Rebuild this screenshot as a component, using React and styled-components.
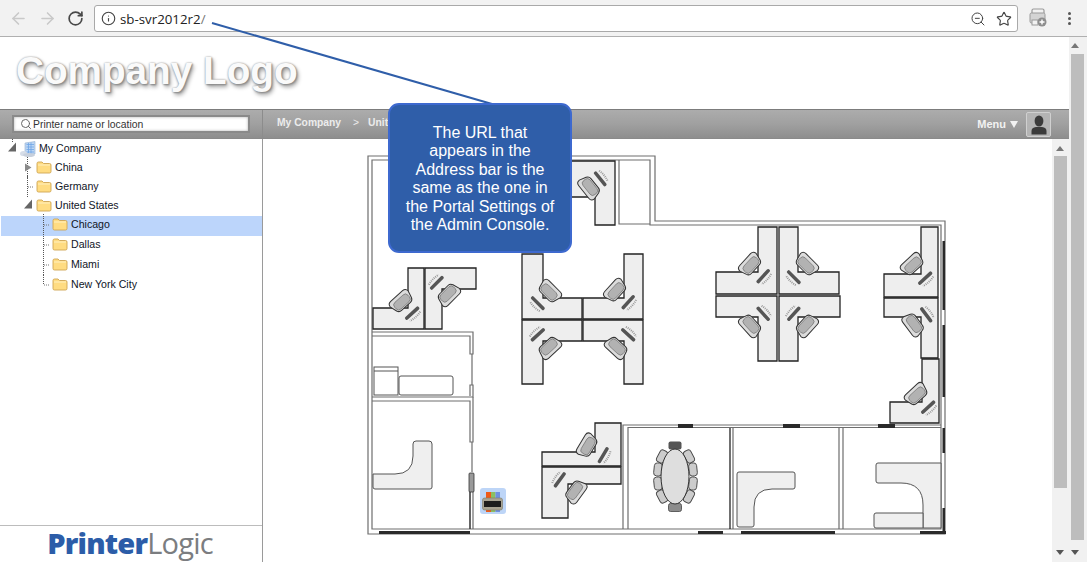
import React from "react";
import styled, { createGlobalStyle } from "styled-components";
import { ArrowLeft, ArrowRight, RotateCw, Info, ZoomOut, Star, Search } from "lucide-react";

const GlobalStyle = createGlobalStyle`
  html, body {
    margin: 0;
    padding: 0;
    height: 100%;
    overflow: hidden;
    background: #ffffff;
  }
  * {
    box-sizing: border-box;
  }
`;

const Page = styled.div`
  position: relative;
  width: 1087px;
  height: 562px;
  display: flex;
  flex-direction: column;
  font-family: "Liberation Sans", Arial, sans-serif;
  overflow: hidden;
`;

const BrowserBar = styled.div`
  height: 37px;
  flex-shrink: 0;
  display: flex;
  align-items: flex-start;
  padding: 5px 0 0 9px;
  background: #f2f2f2;
  border-bottom: 1px solid #b0b0b0;
`;

const NavButton = styled.div`
  width: 29px;
  height: 26px;
  display: flex;
  align-items: center;
  color: ${(p) => p.$color};
`;

const AddressBox = styled.div`
  width: 924px;
  height: 27px;
  margin-left: -2px;
  display: flex;
  align-items: center;
  padding: 0 5px 0 6px;
  background: #ffffff;
  border: 1px solid #a9a9a9;
  border-radius: 3px;
  color: #444444;
`;

const UrlText = styled.span`
  flex: 1;
  margin-left: 4px;
  font-family: "Open Sans", sans-serif;
  font-size: 13.3px;
  color: #222222;
  span {
    color: #777777;
  }
`;

const AddressIcon = styled.div`
  display: flex;
  margin-left: 10px;
`;

const ExtensionSlot = styled.div`
  display: flex;
  margin: 3px 0 0 11px;
`;

const DotsMenu = styled.div`
  display: flex;
  flex-direction: column;
  gap: 2px;
  margin: 7px 0 0 21px;
  i {
    display: block;
    width: 3px;
    height: 3px;
    border-radius: 50%;
    background: #555555;
  }
`;

const Body = styled.div`
  flex: 1;
  display: flex;
  min-height: 0;
`;

const Content = styled.div`
  width: 1069px;
  display: flex;
  flex-direction: column;
`;

const LogoBar = styled.div`
  height: 72px;
  flex-shrink: 0;
  padding: 9px 0 0 16px;
  background: #ffffff;
`;

const CompanyLogo = styled.div`
  font-size: 38.7px;
  line-height: 50px;
  font-weight: bold;
  color: #fafafa;
  text-shadow: 0 0 2px #999999, 1px 1px 2px #808080, 2px 3px 4px #a0a0a0;
`;

const TopBar = styled.div`
  height: 30px;
  flex-shrink: 0;
  display: flex;
  background: linear-gradient(180deg, #acacac 0%, #a0a0a0 50%, #8e8e8e 100%);
  border-top: 1px solid #7c7c7c;
  border-bottom: 1px solid #8a8a8a;
`;

const SearchPane = styled.div`
  width: 263px;
  flex-shrink: 0;
  padding: 5px 0 0 12px;
  border-right: 1px solid #8c8c8c;
`;

const SearchBox = styled.div`
  width: 238px;
  height: 18px;
  display: flex;
  align-items: center;
  gap: 1px;
  padding-left: 6px;
  background: #ffffff;
  border: 2px solid #8a8a8a;
  box-shadow: inset 0 0 3px #b0b0b0;
  font-size: 10.4px;
  color: #333333;
`;

const Crumbs = styled.div`
  flex: 1;
  display: flex;
  align-items: flex-start;
  padding: 7px 0 0 14px;
  font-size: 10.3px;
  font-weight: bold;
  color: #ececec;
`;

const CrumbSep = styled.span`
  margin: 0 9px 0 12px;
  font-weight: normal;
`;

const MenuLabel = styled.div`
  display: flex;
  align-items: center;
  gap: 4px;
  height: 28px;
  margin-right: 8px;
  font-size: 11px;
  font-weight: bold;
  color: #f2f2f2;
`;

const Caret = styled.span`
  width: 0;
  height: 0;
  border-left: 4px solid transparent;
  border-right: 4px solid transparent;
  border-top: 7px solid #f2f2f2;
`;

const UserButton = styled.div`
  width: 25px;
  height: 25px;
  margin: 2px 18px 0 0;
  display: flex;
  align-items: center;
  justify-content: center;
  background: #b4b4b4;
  border: 1px solid #d0d0d0;
  border-radius: 2px;
`;

const Workspace = styled.div`
  flex: 1;
  display: flex;
  min-height: 0;
`;

const Sidebar = styled.div`
  width: 263px;
  flex-shrink: 0;
  display: flex;
  flex-direction: column;
  border-right: 1px solid #9a9a9a;
`;

const Tree = styled.div`
  flex: 1;
  padding: 1px 0 0 1px;
`;

const TreeRow = styled.div`
  display: flex;
  align-items: flex-start;
  height: ${(p) => (p.$depth === 2 ? 20 : 19)}px;
  padding-top: 1px;
  padding-left: ${(p) => 5 + p.$depth * 16}px;
  background: ${(p) => (p.$selected ? "#bcd5fb" : "transparent")};
  font-size: 10.6px;
  line-height: 15px;
  color: #10151f;
`;

const RowLabel = styled.span`
  margin-left: 3px;
`;

const SideFooter = styled.div`
  height: 37px;
  flex-shrink: 0;
  display: flex;
  justify-content: center;
  border-top: 1px solid #bcbcbc;
  padding: 0 2px 0 0;
`;

const BrandName = styled.div`
  font-family: "Open Sans", sans-serif;
  font-size: 29px;
  line-height: 33px;
  letter-spacing: -0.8px;
  color: #7b7d80;
  b {
    font-weight: 800;
    color: #2c5da8;
  }
`;

const MapPane = styled.div`
  flex: 1;
  padding: 11px 0 0 97px;
  background: #ffffff;
  overflow: hidden;
`;

const FloorSvg = styled.svg`
  display: block;
`;

const ScrollTrack = styled.div`
  width: ${(p) => p.$width}px;
  flex-shrink: 0;
  display: flex;
  flex-direction: column;
  align-items: ${(p) => (p.$outer ? "flex-end" : "flex-start")};
  padding: 0 ${(p) => (p.$outer ? 3 : 2)}px 0 ${(p) => (p.$outer ? 0 : 2)}px;
  background: #f1f1f1;
`;

const ScrollThumb = styled.div`
  width: 13px;
  margin-top: ${(p) => p.$top}px;
  height: ${(p) => p.$height}px;
  background: #bdbdbd;
`;

const ArrowUp = styled.span`
  display: block;
  width: 0;
  height: 0;
  margin: ${(p) => p.$top}px 0 0 2px;
  border-left: 4.5px solid transparent;
  border-right: 4.5px solid transparent;
  border-bottom: 5px solid #777777;
  align-self: flex-start;
`;

const ArrowDown = styled.span`
  display: block;
  width: 0;
  height: 0;
  margin: ${(p) => p.$top}px 0 0 2px;
  border-left: 4.5px solid transparent;
  border-right: 4.5px solid transparent;
  border-top: 5px solid #555555;
  align-self: flex-start;
`;

const LeaderLine = styled.svg`
  position: absolute;
  left: 0;
  top: 0;
  pointer-events: none;
`;

const Callout = styled.div`
  position: absolute;
  left: 388px;
  top: 103px;
  width: 184px;
  height: 150px;
  padding-top: 19px;
  background: #2f5ea9;
  border: 2px solid #3d69cf;
  border-radius: 11px;
  font-size: 16px;
  line-height: 18.4px;
  text-align: center;
  color: #ffffff;
`;

const treeData = [
  { name: "My Company", depth: 0, toggle: "open", icon: "org" },
  { name: "China", depth: 1, toggle: "closed" },
  { name: "Germany", depth: 1, toggle: "leaf" },
  { name: "United States", depth: 1, toggle: "open" },
  { name: "Chicago", depth: 2, toggle: "leaf", selected: true },
  { name: "Dallas", depth: 2, toggle: "leaf" },
  { name: "Miami", depth: 2, toggle: "leaf" },
  { name: "New York City", depth: 2, toggle: "last" },
];

function Toggle({ kind, root }) {
  return (
    <svg width="14" height="16" style={{ flexShrink: 0, overflow: "visible" }}>
      {root && <path d="M6.5 -2V2" stroke="#555" strokeDasharray="1 1" fill="none" />}
      {!root && kind !== "open" && (
        <path
          d={kind === "last" ? "M5.5 -2V8" : "M5.5 -3V18"}
          stroke="#555"
          strokeDasharray="1 1"
          fill="none"
        />
      )}
      {(kind === "leaf" || kind === "last") && (
        <path d="M6 8H11" stroke="#777" strokeDasharray="1 1" fill="none" />
      )}
      {kind === "open" && <path d="M10 1.5V10.5H2Z" fill="#666" />}
      {kind === "closed" && <path d="M3 3.5L9.5 7.5L3 11.5Z" fill="#8a8a8a" />}
    </svg>
  );
}

function FolderIcon() {
  return (
    <svg width="16" height="14" viewBox="0 0 16 14" style={{ flexShrink: 0 }}>
      <path
        d="M1 3.5Q1 2 2.5 2H6L7.5 3.5H13.5Q15 3.5 15 5V11.5Q15 13 13.5 13H2.5Q1 13 1 11.5Z"
        fill="#ffdc82"
        stroke="#cfa552"
        strokeWidth="0.9"
      />
      <path d="M2 5H14" stroke="#fff0c0" />
    </svg>
  );
}

function OrgIcon() {
  return (
    <svg width="16" height="16" viewBox="0 0 16 16" style={{ flexShrink: 0 }}>
      <path d="M5 2L15 0.5V13H5Z" fill="#bcd6f4" stroke="#93aed0" strokeWidth="0.6" />
      <path d="M6.5 3.5H14M6.5 6H14M6.5 8.5H14M6.5 11H14M8.5 2V13M11 1.5V13" stroke="#6ea4e6" strokeWidth="0.8" />
      <ellipse cx="3.5" cy="12.5" rx="3.5" ry="2.6" fill="#d6dde8" />
      <ellipse cx="9" cy="14" rx="6" ry="2" fill="#c8d0dc" />
    </svg>
  );
}

function ExtensionIcon() {
  return (
    <svg width="18" height="19" viewBox="0 0 18 19">
      <path d="M3 5V2.5Q3 1 4.5 1H13.5Q15 1 15 2.5V5" fill="none" stroke="#9a9a9a" strokeWidth="1.2" />
      <rect x="1" y="5" width="15" height="10" rx="1.5" fill="#d4d4d4" stroke="#9a9a9a" />
      <rect x="3" y="12" width="6" height="5" fill="#f2f2f2" stroke="#9a9a9a" />
      <circle cx="13" cy="14" r="4.5" fill="#8e8e8e" />
      <path d="M13 11.5V16.5M10.5 14H15.5" stroke="#fff" strokeWidth="1.4" />
    </svg>
  );
}

function UserIcon() {
  return (
    <svg width="18" height="20" viewBox="0 0 18 20">
      <ellipse cx="9" cy="6" rx="4.4" ry="5.5" fill="#3b3b3b" />
      <path d="M1.5 19.5V16Q1.5 12.5 6 12H12Q16.5 12.5 16.5 16V19.5Z" fill="#3b3b3b" />
    </svg>
  );
}

// desks as polygons in page coordinates, chair and keyboard by their centres
const stations = [
  { pts: "408,268 424,268 424,329 373,329 373,308 408,308", chair: [402, 302], kb: [412, 313] },
  { pts: "425,268 476,268 476,289 442,289 442,329 425,329", chair: [448, 294], kb: [437, 283] },
  { pts: "522,254 543,254 543,298 582,298 582,319 522,319", chair: [549, 292], kb: [538, 303] },
  { pts: "624,254 643,254 643,319 583,319 583,298 624,298", chair: [616, 291], kb: [628, 302] },
  { pts: "522,320 582,320 582,341 543,341 543,384 522,384", chair: [549, 347], kb: [538, 335] },
  { pts: "583,320 643,320 643,384 624,384 624,341 583,341", chair: [617, 347], kb: [628, 335] },
  { pts: "758,227 777,227 777,294 716,294 716,272 758,272", chair: [751, 265], kb: [763, 276] },
  { pts: "779,227 798,227 798,272 839,272 839,294 779,294", chair: [806, 265], kb: [794, 277] },
  { pts: "716,296 777,296 777,361 758,361 758,317 716,317", chair: [751, 325], kb: [763, 314] },
  { pts: "779,296 840,296 840,317 798,317 798,361 779,361", chair: [806, 325], kb: [794, 314] },
  { pts: "921,227 938,227 938,297 884,297 884,274 921,274", chair: [913, 265], kb: [925, 278] },
  { pts: "884,298 938,298 938,358 921,358 921,317 884,317", chair: [914, 324], kb: [926, 315] },
  { pts: "922,359 939,359 939,423 890,423 890,402 922,402", chair: [917, 395], kb: [928, 407] },
  { pts: "595,423 621,423 621,466 542,466 542,452 595,452", chair: [588, 446], kb: [603, 455] },
  { pts: "542,467 621,467 621,484 568,484 568,518 542,518", chair: [575, 491], kb: [560, 480] },
  { pts: "540,161 615,161 615,225 595,225 595,197 540,197", chair: [590, 187], kb: [600, 179] },
];

const windows = [
  [678, 424, 15, 4], [783, 424, 17, 4], [878, 424, 17, 4],
  [698, 531, 25, 3], [741, 531, 94, 3], [920, 531, 26, 3], [379, 531, 91, 3],
  [942.5, 241, 2.5, 69], [942.5, 325, 2.5, 72], [942.5, 428, 2.5, 25], [942.5, 508, 2.5, 23],
];

const tableChairs = [
  [-13, -20, 28], [-17, -7, 6], [-17, 7, -6], [-13, 20, -28],
  [14, -20, -28], [18, -7, -6], [18, 7, 6], [14, 20, 28],
];

function Workstation({ pts, chair, kb }) {
  const dx = kb[0] - chair[0];
  const dy = kb[1] - chair[1];
  const dist = Math.hypot(dx, dy);
  const angle = (Math.atan2(dy, dx) * 180) / Math.PI;
  return (
    <g>
      <polygon points={pts} fill="#eeeeee" stroke="#222222" strokeWidth="1.3" />
      <g transform={`translate(${chair[0]} ${chair[1]}) rotate(${angle})`}>
        <path d="M-8 -8Q-8 -12 -4 -12L3 -10Q6 -9 6 -6V6Q6 9 3 10L-4 12Q-8 12 -8 8Z" fill="#dcdcdc" stroke="#333333" />
        <rect x="-4.5" y="-9" width="9" height="18" rx="3.5" fill="#b2b2b2" stroke="#666666" strokeWidth="0.6" />
        <rect x={dist - 1.5} y="-9" width="3.5" height="18" rx="1.5" fill="#555555" />
        <path d={`M${dist + 4.5} -7Q${dist + 6.5} 0 ${dist + 4.5} 7`} stroke="#999" strokeWidth="2" strokeDasharray="1 1" fill="none" />
      </g>
    </g>
  );
}

function FloorPlan() {
  return (
    <FloorSvg width="600" height="390" viewBox="360 150 600 390">
      <g fill="none" stroke="#6e6e6e" strokeWidth="1.2">
        <path d="M368 156H655V221H945V534H368Z" fill="#ffffff" />
        <path d="M372 160H650V225H941V529H372Z" />
        <path d="M619 160V224H650" />
        <path d="M372 332H473V354H470V336H372M472 354V385M470 396V385H473V397H372" />
        <path d="M372 401H470V442H473V397M472 442V472M470 491V529M473 491V529" />
        <path d="M623 529V425H678M693 425H783M800 425H878M895 425H941" />
        <path d="M628 529V427.5H678M693 427.5H783M800 427.5H878M895 427.5H941" />
        <path d="M733 428V529M839 428V529M843 428V529" />
      </g>
      <path d="M730 428V529" stroke="#111" strokeWidth="1.2" />
      <path d="M470 491V529" stroke="#222" strokeWidth="1" />
      <rect x="469" y="473" width="5" height="19" rx="1" fill="#9a9a9a" stroke="#333" strokeWidth="0.8" />

      {stations.map((s, i) => (
        <Workstation key={i} {...s} />
      ))}

      {windows.map(([x, y, w, h], i) => (
        <rect key={i} x={x} y={y} width={w} height={h} fill="#2a2a2a" />
      ))}

      <g fill="#efefef" stroke="#555555" strokeWidth="1">
        <rect x="374" y="367" width="24" height="28" fill="#ffffff" />
        <path d="M374 371H398" />
        <rect x="399" y="376" width="54" height="19" rx="2" fill="#ffffff" />
        <path d="M413 444Q413 441 416 441H429Q432 441 432 444V487Q432 489 430 489H375Q373 489 373 487V474H395Q413 474 413 456Z" />
        <path d="M737 474Q737 472 739 472H793Q795 472 795 474V487Q795 489 793 489H772Q754 489 754 507V525Q754 527 752 527H739Q737 527 737 525Z" />
        <path d="M876 465Q876 463 878 463H941V528H923V505Q923 483 901 483H878Q876 483 876 481Z" />
        <path d="M876 513H923V528H876Q874 528 874 526V515Q874 513 876 513Z" />
      </g>

      <g transform="translate(675 476.5)">
        {tableChairs.map(([x, y, r], i) => (
          <rect
            key={i}
            x={x - 4}
            y={y - 6.5}
            width="8"
            height="13"
            rx="3"
            transform={`rotate(${r} ${x} ${y})`}
            fill="#cccccc"
            stroke="#444444"
            strokeWidth="0.9"
          />
        ))}
        <rect x="-6.5" y="-35" width="13" height="8" rx="2" fill="#555" />
        <rect x="-6.5" y="27" width="13" height="8" rx="2" fill="#8c8c8c" stroke="#444" strokeWidth="0.8" />
        <ellipse rx="14" ry="27.5" fill="#dedede" stroke="#333333" />
      </g>

      <g>
        <rect x="480" y="488" width="26" height="26" rx="3" fill="#bdd5f7" />
        <rect x="486" y="492" width="5" height="20" fill="#ee5a1a" />
        <rect x="491" y="492" width="4.5" height="20" fill="#8cbf63" />
        <rect x="495.5" y="492" width="4.5" height="20" fill="#6f90e0" />
        <rect x="482.5" y="498" width="20" height="12" rx="2" fill="#a8a392" stroke="#7c7868" strokeWidth="0.6" />
        <rect x="484" y="501" width="17" height="6" fill="#1d1d1d" />
      </g>
    </FloorSvg>
  );
}

export default function App() {
  return (
    <Page>
      <GlobalStyle />
      <BrowserBar>
        <NavButton $color="#c9c9c9">
          <ArrowLeft size={19} strokeWidth={2} />
        </NavButton>
        <NavButton $color="#c9c9c9">
          <ArrowRight size={19} strokeWidth={2} />
        </NavButton>
        <NavButton $color="#484848">
          <RotateCw size={17} strokeWidth={2.4} />
        </NavButton>
        <AddressBox>
          <Info size={15} strokeWidth={1.8} />
          <UrlText>
            sb-svr2012r2<span>/</span>
          </UrlText>
          <AddressIcon>
            <ZoomOut size={16} strokeWidth={1.5} />
          </AddressIcon>
          <AddressIcon>
            <Star size={16} strokeWidth={1.7} />
          </AddressIcon>
        </AddressBox>
        <ExtensionSlot>
          <ExtensionIcon />
        </ExtensionSlot>
        <DotsMenu>
          <i />
          <i />
          <i />
        </DotsMenu>
      </BrowserBar>

      <Body>
        <Content>
          <LogoBar>
            <CompanyLogo>Company Logo</CompanyLogo>
          </LogoBar>
          <TopBar>
            <SearchPane>
              <SearchBox>
                <Search size={12} strokeWidth={2} color="#666" />
                Printer name or location
              </SearchBox>
            </SearchPane>
            <Crumbs>
              My Company
              <CrumbSep>&gt;</CrumbSep>
              United States
            </Crumbs>
            <MenuLabel>
              Menu <Caret />
            </MenuLabel>
            <UserButton>
              <UserIcon />
            </UserButton>
          </TopBar>
          <Workspace>
            <Sidebar>
              <Tree>
                {treeData.map((row) => (
                  <TreeRow key={row.name} $depth={row.depth} $selected={row.selected}>
                    <Toggle kind={row.toggle} root={row.depth === 0} />
                    {row.icon === "org" ? <OrgIcon /> : <FolderIcon />}
                    <RowLabel>{row.name}</RowLabel>
                  </TreeRow>
                ))}
              </Tree>
              <SideFooter>
                <BrandName>
                  <b>Printer</b>Logic
                </BrandName>
              </SideFooter>
            </Sidebar>
            <MapPane>
              <FloorPlan />
            </MapPane>
            <ScrollTrack $width={17}>
              <ArrowUp $top={7} />
              <ScrollThumb $top={5} $height={332} />
              <ArrowDown $top={62} />
            </ScrollTrack>
          </Workspace>
        </Content>
        <ScrollTrack $width={18} $outer>
          <ArrowUp $top={6} />
          <ScrollThumb $top={6} $height={486} />
          <ArrowDown $top={10} />
        </ScrollTrack>
      </Body>

      <LeaderLine width="1087" height="562">
        <path d="M212 23L492 104" stroke="#2f5ea9" strokeWidth="2" fill="none" />
      </LeaderLine>
      <Callout>
        The URL that
        <br />
        appears in the
        <br />
        Address bar is the
        <br />
        same as the one in
        <br />
        the Portal Settings of
        <br />
        the Admin Console.
      </Callout>
    </Page>
  );
}
